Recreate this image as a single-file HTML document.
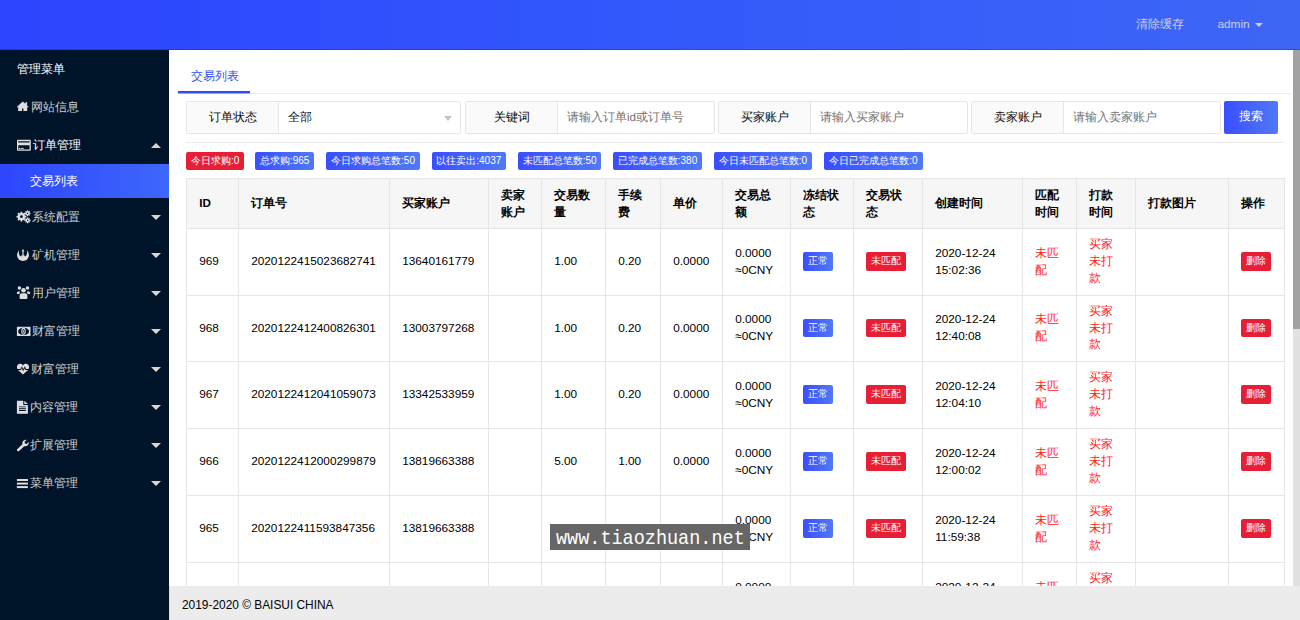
<!DOCTYPE html>
<html><head><meta charset="utf-8">
<style>
*{box-sizing:border-box;margin:0;padding:0}
html,body{width:1300px;height:620px;overflow:hidden;background:#fff}
body{font-family:"Liberation Sans",sans-serif;font-size:11.8px;color:#000;position:relative}
.abs{position:absolute}
#hdr{left:0;top:0;width:1300px;height:50px;background:linear-gradient(90deg,#2c44ff 0%,#3358fb 50%,#3d66f6 100%);box-shadow:inset 0 -1px 0 rgba(0,30,255,.35)}
#hdr .t{position:absolute;color:#cdd0e2;font-size:11.667px;top:16px;line-height:15px}
#side{left:0;top:50px;width:169px;height:570px;background:#001429;color:#cfcfcf;box-shadow:1px 0 0 rgba(0,0,0,.12)}
#side .it{position:absolute;left:0;width:169px;height:38px;line-height:38px;font-size:11.667px}
#side .it svg{position:absolute;fill:#dcdcdc}
#side .it .tx{position:absolute;left:33px;top:0}
#side .car{position:absolute;left:151px;width:0;height:0;border-left:5px solid transparent;border-right:5px solid transparent}
#side .car.d{border-top:5px solid #d6d6d6;top:17px}
#side .car.u{border-bottom:5px solid #d6d6d6;top:17px}
#side .sub{position:absolute;left:0;top:114px;width:169px;height:34px;line-height:34px;background:linear-gradient(90deg,#2d46ff,#3e67fa);color:#fff;font-size:11.667px;padding-left:30.2px}
#main{left:169px;top:50px;width:1124px;height:536px;background:#fff;overflow:hidden}
#sb{left:1293px;top:50px;width:7px;height:536px;background:#e1e1e1}
#sb div{position:absolute;left:0;top:0;width:7px;height:279px;background:#a2a2a2}
#ftr{left:170px;top:586px;width:1130px;height:34px;background:#ececec;font-size:11.9px;line-height:34px;padding:2px 0 0 12px;color:#000}

#mc{position:absolute;left:-169px;top:-50px;width:1300px;height:620px}
.tab{position:absolute;left:191px;top:67px;font-size:11.667px;line-height:17px;color:#3550fa}
.tabline{position:absolute;left:178px;top:93px;width:1113px;height:1px;background:#ececec}
.tabul{position:absolute;left:178px;top:91px;width:72px;height:3px;background:linear-gradient(#2f4bff 0,#2f4bff 2px,rgba(47,75,255,.45) 2px)}
.grp{position:absolute;top:101px;height:33px;border:1px solid #e6e6e6;border-radius:2px;background:#fff;font-size:11.667px}
.grp .lb{position:absolute;left:0;top:0;height:31px;width:92px;background:#fafafa;border-right:1px solid #e6e6e6;text-align:center;line-height:30px;color:#0a0a0a}
.grp .in{position:absolute;top:0;height:31px;line-height:30px;color:#727272}
.btn{position:absolute;left:1224px;top:101px;width:54px;height:33px;border-radius:2px;background:linear-gradient(90deg,#3a4eff,#5079f6);color:#fff;font-size:11.9px;line-height:31.5px;text-align:center}
.hr{position:absolute;left:186px;top:142px;width:1098px;height:1px;background:#e9e9e9}
.bd{position:absolute;top:151.6px;height:18.4px;line-height:18.4px;border-radius:2px;color:#fff;font-size:10px;text-align:center;background:linear-gradient(90deg,#3a4eff,#5079f6)}
.bd.r{background:#e61f37}

.tb{position:absolute;table-layout:fixed;border-collapse:separate;border-spacing:0;border-left:1px solid #e6e6e6;border-top:1px solid #e6e6e6;font-size:11.8px;line-height:16.67px;color:#000}
.tb th,.tb td{border-right:1px solid #e6e6e6;border-bottom:1px solid #e6e6e6;padding:0 0 1px 12.2px;text-align:left;vertical-align:middle;overflow:hidden;word-break:break-all}
.tb th{background:#f6f6f6;font-weight:bold;font-size:11.667px;padding-bottom:0}
.tb td.red{color:#ff1a1a;font-size:11.667px}
.tg{display:inline-block;height:18.8px;line-height:18.8px;padding:0 4.8px;border-radius:2px;color:#fff;font-size:10px;background:linear-gradient(90deg,#3a4eff,#5079f6);vertical-align:middle}
.tg.r{background:#e61f37}
.wm{position:absolute;left:550px;top:524px;width:200px;height:26px;background:#666;color:#fff;font-family:"Liberation Mono",monospace;font-size:18.5px;line-height:26px;padding-left:6px;white-space:nowrap}
</style></head><body>
<div id="hdr" class="abs">
  <span class="t" style="left:1136px">清除缓存</span>
  <span class="t" style="left:1217.5px;font-size:11.8px;top:17px">admin</span>
  <span class="abs" style="left:1255px;top:23.3px;border-left:4.4px solid transparent;border-right:4.4px solid transparent;border-top:4.6px solid #cdd0e2"></span>
</div>
<div id="side" class="abs">
  <div class="it" style="top:0;color:#fff"><span class="tx" style="left:17px;font-weight:500">管理菜单</span></div>
  <div class="it" style="top:38px"><span class="tx" style="left:30.6px">网站信息</span></div>
  <div class="it" style="top:76px;color:#fff"><span class="tx" style="left:32.8px;font-weight:500">订单管理</span><span class="car u"></span></div>
  <div class="sub">交易列表</div>
  <div class="it" style="top:148px"><span class="tx" style="left:32.2px">系统配置</span><span class="car d"></span></div>
  <div class="it" style="top:186px"><span class="tx" style="left:32px">矿机管理</span><span class="car d"></span></div>
  <div class="it" style="top:224px"><span class="tx" style="left:32px">用户管理</span><span class="car d"></span></div>
  <div class="it" style="top:262px"><span class="tx" style="left:31.5px">财富管理</span><span class="car d"></span></div>
  <div class="it" style="top:300px"><span class="tx" style="left:31px">财富管理</span><span class="car d"></span></div>
  <div class="it" style="top:338px"><span class="tx" style="left:30.1px">内容管理</span><span class="car d"></span></div>
  <div class="it" style="top:376px"><span class="tx" style="left:29.75px">扩展管理</span><span class="car d"></span></div>
  <div class="it" style="top:414px"><span class="tx" style="left:29.5px">菜单管理</span><span class="car d"></span></div>
</div>

<svg class="abs" style="left:0;top:0;z-index:3" width="169" height="620" viewBox="0 0 169 620" fill="#dedede">
 <!-- home -->
 <path d="M22.7 101.6L16.8 106.9l0.6 0.6 0.8-0.7V111h3.8v-2.6h1.4V111h3.8v-4.2l0.8 0.7 0.6-0.6-1.5-1.35V102.2h-1.7v1.65z"/>
 <!-- credit card -->
 <path fill-rule="evenodd" d="M18 139.8h11.8a1 1 0 0 1 1 1v9a1 1 0 0 1-1 1H18a1 1 0 0 1-1-1v-9a1 1 0 0 1 1-1zM18.3 141.2v1.4h11.2v-1.4zM18.3 145.3v4.2h11.2v-4.2z"/>
 <rect x="18.8" y="147.9" width="1.7" height="1.2"/><rect x="21.2" y="147.9" width="2.4" height="1.2"/>
 <!-- cogs -->
 <g transform="translate(21.4 216.7)"><circle r="3.6"/><g id="tb"><rect x="-0.9" y="-4.9" width="1.8" height="9.8"/><rect x="-0.9" y="-4.9" width="1.8" height="9.8" transform="rotate(45)"/><rect x="-0.9" y="-4.9" width="1.8" height="9.8" transform="rotate(90)"/><rect x="-0.9" y="-4.9" width="1.8" height="9.8" transform="rotate(135)"/></g></g>
 <circle cx="21.4" cy="216.7" r="1.4" fill="#001429"/>
 <g transform="translate(27.6 213.3)"><circle r="2"/><rect x="-0.6" y="-2.9" width="1.2" height="5.8"/><rect x="-2.9" y="-0.6" width="5.8" height="1.2"/><rect x="-0.6" y="-2.9" width="1.2" height="5.8" transform="rotate(45)"/><rect x="-0.6" y="-2.9" width="1.2" height="5.8" transform="rotate(-45)"/><circle r="0.7" fill="#001429"/></g>
 <g transform="translate(27.6 220.4)"><circle r="2"/><rect x="-0.6" y="-2.9" width="1.2" height="5.8"/><rect x="-2.9" y="-0.6" width="5.8" height="1.2"/><rect x="-0.6" y="-2.9" width="1.2" height="5.8" transform="rotate(45)"/><rect x="-0.6" y="-2.9" width="1.2" height="5.8" transform="rotate(-45)"/><circle r="0.7" fill="#001429"/></g>
 <!-- rebel -->
 <circle cx="23" cy="255" r="6"/>
 <path fill="#001429" d="M19.9 249.1C18.4 250.9 18.5 253.9 20.2 256.3L25.8 256.3C27.5 253.9 27.6 250.9 26.1 249.1Z"/>
 <path d="M23 249L24.4 251.3H23.6V256.6H22.4V251.3H21.6Z"/>
 <path d="M20.2 256.3Q23 254.4 25.8 256.3Q23 257.4 20.2 256.3Z"/>
 <!-- users -->
 <circle cx="19.4" cy="288.1" r="1.75"/><circle cx="27.5" cy="288.1" r="1.75"/><circle cx="23.5" cy="290.2" r="2.3"/>
 <path d="M16.9 293.3c0-1 0.6-1.7 1.6-1.7h1.7c-0.5 0.7-0.7 1.5-0.6 2.4h-2.7zM30.1 293.3c0-1-0.6-1.7-1.6-1.7h-1.7c0.5 0.7 0.7 1.5 0.6 2.4h2.7z"/>
 <path d="M19.6 295.6c0-1.2 0.9-2.3 2.2-2.3h3.4c1.3 0 2.2 1.1 2.2 2.3v2.5a1 1 0 0 1-1 1h-5.8a1 1 0 0 1-1-1z"/>
 <!-- money -->
 <rect x="16.9" y="326.8" width="13.6" height="9.2"/>
 <ellipse cx="23.6" cy="331.4" rx="5.4" ry="3.7" fill="#001429"/>
 <ellipse cx="23.5" cy="331.3" rx="1.7" ry="2.9" fill="none" stroke="#dedede" stroke-width="1.1"/>
 <rect x="23.1" y="330" width="0.8" height="2.6"/>
 <!-- heartbeat -->
 <path d="M23 374.5l-5-4.6h2.9l0.9-1.6 1.3 2.9 1.6-2.9 0.6 1.6h2.9zM17.4 369c-0.3-0.6-0.5-1.3-0.5-2 0-1.8 1.4-3.2 3.2-3.2 1.3 0 2.3 0.7 2.9 1.6 0.6-0.9 1.6-1.6 2.9-1.6 1.8 0 3.2 1.4 3.2 3.2 0 0.7-0.2 1.4-0.5 2h-2.6l-1.1-2.8-1.7 3-1.3-2.9-1.4 2.7z"/>
 <!-- file -->
 <path fill-rule="evenodd" d="M16.9 400.8h6.4v4.3h4.6v8.6H16.9zM24.3 400.8l3.6 3.3h-3.6zM19 406.4v0.9h6.9v-0.9zM19 408.3v0.9h6.9v-0.9zM19 410.1v0.9h6.9v-0.9z"/>
 <!-- wrench -->
 <path d="M17.8 451.2c-0.7-0.3-1-0.9-0.9-1.6l5.5-5.3c-0.4-1.3 0-2.7 1-3.6 0.9-0.8 2.1-1.1 3.2-0.8l-2 1.9 0.4 1.7 1.7 0.4 1.9-1.9c0.4 1.2 0 2.4-0.8 3.3-1 1-2.4 1.3-3.6 0.9l-5.4 5.1c-0.3 0.1-0.7 0.1-1 0z"/>
 <!-- bars -->
 <rect x="16.9" y="479" width="11" height="2"/><rect x="16.9" y="482.6" width="11" height="2"/><rect x="16.9" y="486.1" width="11" height="2"/>
</svg>
<div id="main" class="abs">
<div id="mc">
  <div class="tab">交易列表</div>
  <div class="tabline"></div>
  <div class="tabul"></div>
  <div class="grp" style="left:186px;width:275px"><div class="lb">订单状态</div><div class="in" style="left:101px;color:#111">全部</div><span class="abs" style="left:257px;top:13.5px;border-left:4.5px solid transparent;border-right:4.5px solid transparent;border-top:5px solid #c2c2c2"></span></div>
  <div class="grp" style="left:465px;width:250px"><div class="lb">关键词</div><div class="in" style="left:101px">请输入订单id或订单号</div></div>
  <div class="grp" style="left:718px;width:250px"><div class="lb">买家账户</div><div class="in" style="left:101px">请输入买家账户</div></div>
  <div class="grp" style="left:971px;width:250px"><div class="lb">卖家账户</div><div class="in" style="left:101px">请输入卖家账户</div></div>
  <div class="btn">搜索</div>
  <div class="hr"></div>
  <div class="bd r" style="left:186.4px;width:57.6px">今日求购:0</div>
  <div class="bd" style="left:255.4px;width:58.6px">总求购:965</div>
  <div class="bd" style="left:326px;width:94px">今日求购总笔数:50</div>
  <div class="bd" style="left:431.6px;width:74.4px">以往卖出:4037</div>
  <div class="bd" style="left:518px;width:83.4px">未匹配总笔数:50</div>
  <div class="bd" style="left:613px;width:89px">已完成总笔数:380</div>
  <div class="bd" style="left:714px;width:98px">今日未匹配总笔数:0</div>
  <div class="bd" style="left:824.4px;width:98.2px">今日已完成总笔数:0</div>
  <table class="tb" style="left:186px;top:178px;width:1099px"><colgroup><col style="width:52px"><col style="width:151px"><col style="width:99px"><col style="width:53px"><col style="width:64px"><col style="width:55px"><col style="width:62px"><col style="width:68px"><col style="width:63px"><col style="width:69px"><col style="width:100px"><col style="width:54px"><col style="width:59px"><col style="width:93px"><col style="width:56px"></colgroup>
<thead><tr style="height:50px"><th>ID</th><th>订单号</th><th>买家账户</th><th>卖家<br>账户</th><th>交易数<br>量</th><th>手续<br>费</th><th>单价</th><th>交易总<br>额</th><th>冻结状<br>态</th><th>交易状<br>态</th><th>创建时间</th><th>匹配<br>时间</th><th>打款<br>时间</th><th>打款图片</th><th>操作</th></tr></thead><tbody>
<tr style="height:67px"><td>969</td><td>2020122415023682741</td><td>13640161779</td><td></td><td>1.00</td><td>0.20</td><td>0.0000</td><td>0.0000<br>≈0CNY</td><td><span class="tg">正常</span></td><td><span class="tg r">未匹配</span></td><td>2020-12-24<br>15:02:36</td><td class="red">未匹<br>配</td><td class="red">买家<br>未打<br>款</td><td></td><td><span class="tg r">删除</span></td></tr>
<tr style="height:66px"><td>968</td><td>2020122412400826301</td><td>13003797268</td><td></td><td>1.00</td><td>0.20</td><td>0.0000</td><td>0.0000<br>≈0CNY</td><td><span class="tg">正常</span></td><td><span class="tg r">未匹配</span></td><td>2020-12-24<br>12:40:08</td><td class="red">未匹<br>配</td><td class="red">买家<br>未打<br>款</td><td></td><td><span class="tg r">删除</span></td></tr>
<tr style="height:67px"><td>967</td><td>2020122412041059073</td><td>13342533959</td><td></td><td>1.00</td><td>0.20</td><td>0.0000</td><td>0.0000<br>≈0CNY</td><td><span class="tg">正常</span></td><td><span class="tg r">未匹配</span></td><td>2020-12-24<br>12:04:10</td><td class="red">未匹<br>配</td><td class="red">买家<br>未打<br>款</td><td></td><td><span class="tg r">删除</span></td></tr>
<tr style="height:67px"><td>966</td><td>2020122412000299879</td><td>13819663388</td><td></td><td>5.00</td><td>1.00</td><td>0.0000</td><td>0.0000<br>≈0CNY</td><td><span class="tg">正常</span></td><td><span class="tg r">未匹配</span></td><td>2020-12-24<br>12:00:02</td><td class="red">未匹<br>配</td><td class="red">买家<br>未打<br>款</td><td></td><td><span class="tg r">删除</span></td></tr>
<tr style="height:67px"><td>965</td><td>2020122411593847356</td><td>13819663388</td><td></td><td>1.00</td><td>0.20</td><td>0.0000</td><td>0.0000<br>≈0CNY</td><td><span class="tg">正常</span></td><td><span class="tg r">未匹配</span></td><td>2020-12-24<br>11:59:38</td><td class="red">未匹<br>配</td><td class="red">买家<br>未打<br>款</td><td></td><td><span class="tg r">删除</span></td></tr>
<tr style="height:67px"><td>964</td><td>2020122411400000000</td><td>13819663388</td><td></td><td>1.00</td><td>0.20</td><td>0.0000</td><td>0.0000<br>≈0CNY</td><td><span class="tg">正常</span></td><td><span class="tg r">未匹配</span></td><td>2020-12-24<br>11:40:00</td><td class="red">未匹<br>配</td><td class="red">买家<br>未打<br>款</td><td></td><td><span class="tg r">删除</span></td></tr>
</tbody></table>
<div class="wm"><span style="display:inline-block;transform:translateY(4px) scaleY(1.13);transform-origin:0 100%">www.tiaozhuan.net</span></div>
</div>
</div>
<div id="sb" class="abs"><div></div></div>
<div id="ftr" class="abs">2019-2020 © BAISUI CHINA</div>
</body></html>
